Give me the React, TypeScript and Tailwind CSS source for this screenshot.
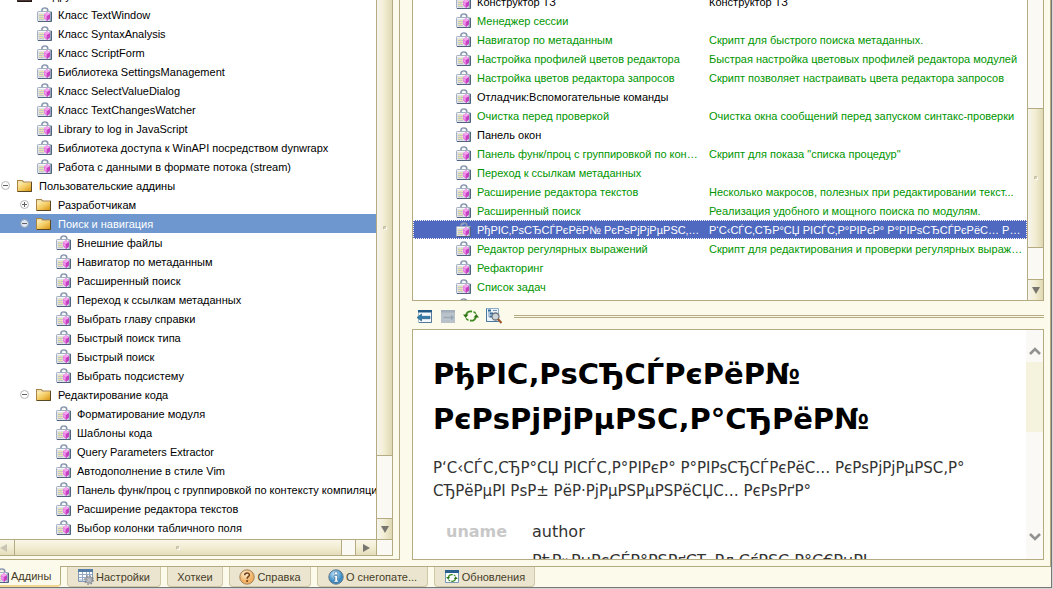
import React from "react";

type TreeRow = { label: string; level: number; kind: "folder" | "script" | "dark"; state?: "open" | "closed"; selected?: boolean };

const tree: TreeRow[] = [
  { label: "Подру", level: 0, kind: "dark" },
  { label: "Класс TextWindow", level: 1, kind: "script" },
  { label: "Класс SyntaxAnalysis", level: 1, kind: "script" },
  { label: "Класс ScriptForm", level: 1, kind: "script" },
  { label: "Библиотека SettingsManagement", level: 1, kind: "script" },
  { label: "Класс SelectValueDialog", level: 1, kind: "script" },
  { label: "Класс TextChangesWatcher", level: 1, kind: "script" },
  { label: "Library to log in JavaScript", level: 1, kind: "script" },
  { label: "Библиотека доступа к WinAPI посредством dynwrapx", level: 1, kind: "script" },
  { label: "Работа с данными в формате потока (stream)", level: 1, kind: "script" },
  { label: "Пользовательские аддины", level: 0, kind: "folder", state: "open" },
  { label: "Разработчикам", level: 1, kind: "folder", state: "closed" },
  { label: "Поиск и навигация", level: 1, kind: "folder", state: "open", selected: true },
  { label: "Внешние файлы", level: 2, kind: "script" },
  { label: "Навигатор по метаданным", level: 2, kind: "script" },
  { label: "Расширенный поиск", level: 2, kind: "script" },
  { label: "Переход к ссылкам метаданных", level: 2, kind: "script" },
  { label: "Выбрать главу справки", level: 2, kind: "script" },
  { label: "Быстрый поиск типа", level: 2, kind: "script" },
  { label: "Быстрый поиск", level: 2, kind: "script" },
  { label: "Выбрать подсистему", level: 2, kind: "script" },
  { label: "Редактирование кода", level: 1, kind: "folder", state: "open" },
  { label: "Форматирование модуля", level: 2, kind: "script" },
  { label: "Шаблоны кода", level: 2, kind: "script" },
  { label: "Query Parameters Extractor", level: 2, kind: "script" },
  { label: "Автодополнение в стиле Vim", level: 2, kind: "script" },
  { label: "Панель функ/проц с группировкой по контексту компиляции", level: 2, kind: "script" },
  { label: "Расширение редактора текстов", level: 2, kind: "script" },
  { label: "Выбор колонки табличного поля", level: 2, kind: "script" },
  { label: "", level: 2, kind: "script" },
];

type AddinRow = { name: string; text?: string; loaded?: boolean; selected?: boolean };

const addins: AddinRow[] = [
  { name: "Конструктор ТЗ", text: "Конструктор ТЗ" },
  { name: "Менеджер сессии", loaded: true },
  { name: "Навигатор по метаданным", text: "Скрипт для быстрого поиска метаданных.", loaded: true },
  { name: "Настройка профилей цветов редактора", text: "Быстрая настройка цветовых профилей редактора модулей", loaded: true },
  { name: "Настройка цветов редактора запросов", text: "Скрипт позволяет настраивать цвета редактора запросов", loaded: true },
  { name: "Отладчик:Вспомогательные команды" },
  { name: "Очистка перед проверкой", text: "Очистка окна сообщений перед запуском синтакс-проверки", loaded: true },
  { name: "Панель окон" },
  { name: "Панель функ/проц с группировкой по контексту компиляции", text: "Скрипт для показа \"списка процедур\"", loaded: true },
  { name: "Переход к ссылкам метаданных", loaded: true },
  { name: "Расширение редактора текстов", text: "Несколько макросов, полезных при редактировании текст...", loaded: true },
  { name: "Расширенный поиск", text: "Реализация удобного и мощного поиска по модулям.", loaded: true },
  { name: "РђРІС‚РѕСЂСЃРєРёР№ РєРѕРјРјРµРЅС‚Р°СЂРёР№", text: "Р‘С‹СЃС‚СЂР°СЏ РІСЃС‚Р°РІРєР° Р°РІРѕСЂСЃРєРёС… РєРѕРјРјРµРЅС‚Р°СЂРёРµРІ", loaded: true, selected: true },
  { name: "Редактор регулярных выражений", text: "Скрипт для редактирования и проверки регулярных выражений", loaded: true },
  { name: "Рефакторинг", loaded: true },
  { name: "Список задач", loaded: true },
  { name: "" },
];

function ScriptIcon() {
  return (
    <svg className="block h-4 w-4 shrink-0" viewBox="-1 0 16 16" aria-hidden="true">
      <path d="M5 5V3.2C5 1.8 6 1 7.8 1s2.9.8 2.9 2.2V5" fill="none" stroke="#8796ad" strokeWidth="1.7" />
      <path d="M6 3.2C6 2.4 6.6 2 7.8 2" fill="none" stroke="#d6dee9" strokeWidth=".7" />
      <rect x=".5" y="4.5" width="14" height="10" rx=".8" fill="#dfe3e9" stroke="#a3b0c2" />
      <path d="M1 5h13v1H1z" fill="#f5f7f9" />
      <path d="M12.5 5h2v9h-2z" fill="#9aa6ba" />
      <path d="M14.5 5v9.5H1" fill="none" stroke="#52637f" />
      <path d="M2 7.5h5M2 9.5h4.5M2 11.5h5" stroke="#f5edae" strokeWidth="1" />
      <path d="M2 8.3h5M2 10.3h4.5M2 12.3h5" stroke="#a9adb0" strokeWidth=".7" />
      <path d="M10 5l3 2.3v4L10 14l-3-2.700v-4z" fill="#e26cdb" />
      <path d="M10 5l3 2.3L10 9 7 7.300z" fill="#f3a4ec" />
      <path d="M10 9l3-1.700v4L10 14z" fill="#c640c3" />
      <path d="M7.5 8l1.8 1.2v2.5l-1.8-1z" fill="#f09aea" />
    </svg>
  );
}

function FolderIcon({ dark = false }: { dark?: boolean }) {
  return (
    <svg className="block h-4 w-4 shrink-0" viewBox="0 0 16 16" aria-hidden="true">
      <defs>
        <linearGradient id="folderFace" x1="0" y1="0" x2="1" y2="1">
          <stop offset="0" stopColor="#fff0b5" />
          <stop offset=".5" stopColor="#f3cb62" />
          <stop offset="1" stopColor="#d99414" />
        </linearGradient>
      </defs>
      <path d="M0 2h5.5L7 3.5h8V14H0z" fill={dark ? "#3a2c28" : "#a98445"} />
      <path d="M1 3h4l1.5 1.5H14V6H1z" fill="#f0e0ac" />
      <path d="M1 5h13v8H1z" fill={dark ? "#4a3732" : "url(#folderFace)"} />
      <path d="M14.5 4v9.5H1" fill="none" stroke={dark ? "#1d1413" : "#5a4724"} />
    </svg>
  );
}

function Expander({ state, label, selected }: { state: "open" | "closed"; label: string; selected?: boolean }) {
  return (
    <button type="button" aria-label={(state === "open" ? "Свернуть " : "Развернуть ") + label} className="block h-3 w-3 shrink-0">
      <svg viewBox="0 0 12 12" className="block h-3 w-3">
        <circle cx="5.5" cy="5.5" r="4" fill={selected ? "#dce6f4" : "#fff"} stroke={selected ? "#8b9ab0" : "#b5b5b5"} />
        <path d="M3 5.5h5" stroke="#626262" />
        {state === "closed" && <path d="M5.5 3v5" stroke="#626262" />}
      </svg>
    </button>
  );
}

const indents = ["pl-0", "pl-[19px]", "pl-[38px]"];

function TreeItem({ row }: { row: TreeRow }) {
  return (
    <li
      role="treeitem"
      aria-selected={!!row.selected}
      className={`flex h-[19px] items-center whitespace-nowrap ${indents[row.level]} ${row.selected ? "bg-[#6e97cf] text-white" : ""}`}
    >
      <span className="flex w-[17px] shrink-0 pt-px">{row.state && <Expander state={row.state} label={row.label} selected={row.selected} />}</span>
      {row.kind === "script" ? <ScriptIcon /> : <FolderIcon dark={row.kind === "dark"} />}
      <span className="pt-[2px] pl-[6px] leading-[17px]">{row.label}</span>
    </li>
  );
}

function Arrow({ dir, faded }: { dir: "down" | "left" | "right"; faded?: boolean }) {
  const d = { down: "M0 1h8L4 8z", left: "M7 0v8L0 4z", right: "M1 0v8l7-4z" }[dir];
  return (
    <svg viewBox="0 0 8 8" className="h-2 w-2" aria-hidden="true">
      <path d={d} fill={faded ? "#c9c5b5" : "#77756d"} />
    </svg>
  );
}

function Grip() {
  return <span className="h-1 w-1 rounded-full border border-r-white border-b-white border-t-[#bdb79b] border-l-[#bdb79b] bg-[#dad4b9]" />;
}

const vFace = "bg-linear-to-r from-[#f6f5ed] via-[#f2edd2] to-[#dfd8b4]";
const hFace = "bg-linear-to-b from-[#f8f6e9] via-[#f2edd2] to-[#e4ddbc]";

function AddinTree() {
  return (
    <section className="flex w-[400px] shrink-0 flex-col border-r border-b border-[#b5ab82] pr-[6px] pb-[3px]">
      <div className="flex min-h-0 flex-1 border-r border-[#b5ab82]">
        <ul role="tree" aria-label="Аддины" className="min-w-0 flex-1 overflow-hidden bg-white">
          <li role="none" className="-mt-[14px]">
            <ul role="group">{tree.map((row, i) => <TreeItem key={i} row={row} />)}</ul>
          </li>
        </ul>
        <div className="flex w-4 flex-col border-l border-[#b5ab82] bg-[#faf9f4]">
          <div className={`flex flex-[456] items-center justify-center border-b border-[#b5ab82] ${vFace}`}><Grip /></div>
          <div className="flex-[62]" />
          <button type="button" aria-label="Вниз" className={`flex h-[21px] items-center justify-center border-t border-[#b5ab82] ${vFace}`}><Arrow dir="down" /></button>
        </div>
      </div>
      <div className="flex h-[17px] border-y border-r border-[#b5ab82] bg-[#faf9f4]">
        <button type="button" aria-label="Влево" className={`flex w-[15px] items-center border-r border-[#b5ab82] ${hFace}`}><Arrow dir="left" faded /></button>
        <div className={`flex flex-1 items-center justify-center border-r border-[#b5ab82] ${hFace}`}><Grip /></div>
        <div className="w-[13px]" />
        <button type="button" aria-label="Вправо" className={`flex w-[21px] items-center justify-center border-l border-[#b5ab82] ${hFace}`}><Arrow dir="right" /></button>
        <div className="w-4 border-l border-[#b5ab82]" />
      </div>
    </section>
  );
}

function AddinTable() {
  return (
    <div className="flex h-[301px] shrink-0 border-x border-b border-[#b5ab82] bg-white">
      <div className="min-w-0 flex-1 overflow-hidden">
        <table className="-mt-2 w-full table-fixed border-collapse leading-[17px]">
          <colgroup>
            <col className="w-[63px]" />
            <col className="w-[230px]" />
            <col />
          </colgroup>
          <tbody>
            {addins.map((row, i) => (
              <tr
                key={i}
                aria-selected={!!row.selected}
                className={`h-[19px] ${row.selected ? "bg-[#5069c0] text-white outline-1 -outline-offset-1 outline-dotted outline-white" : row.loaded ? "text-[#009600]" : ""}`}
              >
                <td className="p-0 pl-[42px]"><ScriptIcon /></td>
                <td className="truncate p-0 pt-[2px] pr-1 pl-px">{row.name}</td>
                <td className="truncate p-0 pt-[2px] pr-1 pl-[3px]">{row.text}</td>
              </tr>
            ))}
          </tbody>
        </table>
      </div>
      <div className="flex w-4 flex-col border-l border-[#b5ab82] bg-[#faf9f4]">
        <div className="flex-[109]" />
        <div className={`flex flex-[139] items-center justify-center border-y border-[#b5ab82] ${vFace}`}><Grip /></div>
        <div className="flex-[31]" />
        <button type="button" aria-label="Вниз" className={`flex h-[21px] items-center justify-center border-t border-[#b5ab82] ${vFace}`}><Arrow dir="down" /></button>
      </div>
    </div>
  );
}

function RefreshGlyph() {
  return (
    <g>
      <path d="M3 7.500C3.300 4.500 6 2.800 9 3.500M13 8.500C12.700 11.500 10 13.200 7 12.500" fill="none" stroke="#3c8a1e" strokeWidth="1.8" />
      <path d="M0 6.5h5.4L2.7 10zM10.6 9.5H16L13.3 6z" fill="#2c7413" />
      <path d="M10.5 3.8c1.2.4 1.9 1.1 2.3 2M5.5 12.2c-1.2-.4-1.9-1.1-2.3-2" fill="none" stroke="#3c8a1e" strokeWidth="1.5" />
    </g>
  );
}

function Toolbar() {
  const tool = "block h-4 w-4";
  return (
    <div className="flex h-7 shrink-0 items-center pt-[2px] pl-[5px]">
      <div className="flex gap-[7px]">
        <button type="button" aria-label="Назад">
          <svg viewBox="0 0 16 16" className={tool}>
            <path d="M1.5 2.5h13v12h-13z" fill="#f5f9fd" stroke="#a9bdd0" />
            <path d="M1 2h14v2.5H1z" fill="#225a86" />
            <path d="M14.5 4v10.5H2" fill="none" stroke="#54779a" />
            <path d="M0 9.5L4.5 6v2.3H13v2.4H4.5V13z" fill="#327fae" stroke="#1c547b" strokeWidth=".6" />
          </svg>
        </button>
        <button type="button" aria-label="Вперёд" disabled>
          <svg viewBox="0 0 16 16" className={tool}>
            <path d="M1 2h14v13H1z" fill="#b8c0c9" />
            <path d="M1 2h14v2.5H1z" fill="#a5afbb" />
            <path d="M15 9.5l-4.500-4v2.700H3v2.600h7.500v2.700z" fill="#9aa8b6" stroke="#cbd1d7" strokeWidth=".6" />
          </svg>
        </button>
        <button type="button" aria-label="Обновить">
          <svg viewBox="0 0 16 16" className={tool}><RefreshGlyph /></svg>
        </button>
        <button type="button" aria-label="Найти в дереве">
          <svg viewBox="0 0 16 16" className={tool}>
            <path d="M.5.5h12v13H.5z" fill="#edf3f9" stroke="#8badc9" />
            <path d="M.5.5v13h12" fill="none" stroke="#4879a0" />
            <path d="M2 2.5h3M4 5.5h3M4 8.5h2" stroke="#2c689b" strokeWidth="2" />
            <path d="M7 2.5h4M3 3v6h1" fill="none" stroke="#7295b3" />
            <circle cx="9.5" cy="8.5" r="3.5" fill="#cbd4d6" stroke="#6e7680" strokeWidth="1.3" />
            <path d="M12 11l3.5 4" stroke="#9b5527" strokeWidth="2" />
          </svg>
        </button>
      </div>
      <div className="ml-3 h-[3px] flex-1 border-y border-[#b5ab82]" />
    </div>
  );
}

function Chevron({ up }: { up?: boolean }) {
  return (
    <svg viewBox="0 0 12 10" className="h-[10px] w-3" aria-hidden="true">
      <path d={up ? "M1 8l5-5 5 5" : "M1 2l5 5 5-5"} fill="none" stroke="#929290" strokeWidth="2.6" />
    </svg>
  );
}

function Description() {
  return (
    <div className="flex min-h-0 flex-1 border border-[#b5ab82] bg-white font-['DejaVu_Sans',Verdana,sans-serif] text-[#333]">
      <article className="min-w-0 flex-1 overflow-hidden pt-[22px] pl-5">
        <h1 className="pr-20 text-[29px] leading-[45px] font-bold text-black">РђРІС‚РѕСЂСЃРєРёР№ РєРѕРјРјРµРЅС‚Р°СЂРёР№</h1>
        <p className="mt-[15px] text-[15px] leading-[23px]">
          Р‘С‹СЃС‚СЂР°СЏ РІСЃС‚Р°РІРєР° Р°РІРѕСЂСЃРєРёС… РєРѕРјРјРµРЅС‚Р°
          <br />
          СЂРёРµРІ РѕР± РёР·РјРµРЅРµРЅРёСЏС… РєРѕРґР°
        </p>
        <dl className="mt-[15px] grid grid-cols-[86px_1fr] gap-y-[2px] pl-[13px] text-[16px] leading-[27px]">
          <dt className="font-bold text-[#c8c8c8]">uname</dt>
          <dd>author</dd>
          <dd className="col-start-2 whitespace-nowrap">РђР»РµРєСЃР°РЅРґСЂ РљСѓРЅС‚Р°С€РµРІ</dd>
        </dl>
      </article>
      <div className="flex w-[17px] flex-col items-center bg-[#faf9f6]">
        <button type="button" aria-label="Прокрутить вверх" className="flex h-8 items-end pb-[6px]"><Chevron up /></button>
        <div className="h-[70px] w-full bg-[#f5f2de]" />
        <div className="flex-1" />
        <button type="button" aria-label="Прокрутить вниз" className="flex h-[27px]"><Chevron /></button>
      </div>
    </div>
  );
}

function SettingsIcon() {
  return (
    <svg viewBox="0 0 16 16" className="h-4 w-4 shrink-0" aria-hidden="true">
      <path d="M.5.5h14v12H.5z" fill="#fff" stroke="#8399b5" />
      <path d="M0 0h15v3H0z" fill="#547da8" />
      <path d="M1 5.5h13M1 8.5h13M1 11h13M4.5 3v10M8.5 3v10M11.5 3v10" stroke="#93abc5" />
      <circle cx="11" cy="11" r="3.2" fill="#c0c3c8" stroke="#8d9198" strokeWidth="1" />
      <circle cx="11" cy="11" r="4.2" fill="none" stroke="#868b92" strokeWidth="1.4" strokeDasharray="1.65 1.65" />
      <circle cx="11" cy="11" r="1.2" fill="#fff" stroke="#666" strokeWidth=".5" />
    </svg>
  );
}

function HelpIcon() {
  return (
    <svg viewBox="0 0 16 16" className="h-4 w-4 shrink-0" aria-hidden="true">
      <defs><radialGradient id="helpFace" cx=".4" cy=".3"><stop stopColor="#fff2d9" /><stop offset="1" stopColor="#f1b062" /></radialGradient></defs>
      <circle cx="8" cy="8" r="7.2" fill="url(#helpFace)" stroke="#a58158" />
      <path d="M5.7 6.2C5.7 3.2 10.5 3.3 10.4 6c0 1.6-2.3 1.8-2.3 3.7" fill="none" stroke="#704018" strokeWidth="1.5" />
      <circle cx="8.1" cy="12" r="1" fill="#704018" />
    </svg>
  );
}

function InfoIcon() {
  return (
    <svg viewBox="0 0 16 16" className="h-4 w-4 shrink-0" aria-hidden="true">
      <defs><radialGradient id="infoFace" cx=".4" cy=".3"><stop stopColor="#c4e5fa" /><stop offset="1" stopColor="#3d8cc4" /></radialGradient></defs>
      <circle cx="8" cy="8" r="7.2" fill="url(#infoFace)" stroke="#63788d" />
      <circle cx="8" cy="4.3" r="1.6" fill="#fff" stroke="#2c5f8a" strokeWidth=".5" />
      <path d="M6 6.5h3.5v5h1V13H5.8v-1.5H7V8H6z" fill="#fff" stroke="#2c5f8a" strokeWidth=".5" />
    </svg>
  );
}

function UpdateIcon() {
  return (
    <svg viewBox="0 0 16 16" className="h-4 w-4 shrink-0" aria-hidden="true">
      <path d="M1.5 1.5h13v12h-13z" fill="#fafdff" stroke="#7898b4" />
      <path d="M1 1h14v3H1z" fill="#285f8d" />
      <g transform="translate(2.2 3.2) scale(.72)"><RefreshGlyph /></g>
    </svg>
  );
}

const tabs = [
  { label: "Настройки", icon: <SettingsIcon />, cls: "w-[94px]" },
  { label: "Хоткеи", icon: null, cls: "w-[56px]" },
  { label: "Справка", icon: <HelpIcon />, cls: "w-[82px]" },
  { label: "О снегопате...", icon: <InfoIcon />, cls: "w-[111px]" },
  { label: "Обновления", icon: <UpdateIcon />, cls: "w-[101px]" },
];

function TabBar() {
  return (
    <div role="tablist" className="flex h-[21px] shrink-0 leading-[17px] text-[#463c28]">
      <button type="button" role="tab" aria-selected="true" className="flex w-[61px] items-center overflow-hidden rounded-br border-r border-b-2 border-r-[#b5ab82] border-b-[#f3d78c]">
        <span className="-ml-[7px] shrink-0"><ScriptIcon /></span>
        <span className="pt-[2px] pl-[2px] whitespace-nowrap">Аддины</span>
      </button>
      <div className="flex flex-1 gap-[6px] border-t border-[#b5ab82] pl-[6px]">
        {tabs.map((tab) => (
          <button
            key={tab.label}
            type="button"
            role="tab"
            aria-selected="false"
            className={`flex h-5 items-center justify-center gap-[2px] rounded-b border-x border-b border-[#cfc7a6] bg-[#ebe5cf] whitespace-nowrap ${tab.cls}`}
          >
            {tab.icon}
            <span className="pt-[2px]">{tab.label}</span>
          </button>
        ))}
      </div>
    </div>
  );
}

export default function App() {
  return (
    <div className="h-screen overflow-hidden bg-[#d4d4d4] pr-px pb-px font-['Liberation_Sans',Arial,sans-serif] text-[11px] leading-[19px] text-black">
      <main className="flex h-full flex-col border-r border-b border-[#777] bg-[#fcfaeb]">
        <div className="flex min-h-0 flex-1 border-r border-[#b5ab82] pb-[6px]">
          <AddinTree />
          <section className="flex min-w-0 flex-1 flex-col pr-[6px] pl-3">
            <AddinTable />
            <Toolbar />
            <Description />
          </section>
        </div>
        <TabBar />
      </main>
    </div>
  );
}
